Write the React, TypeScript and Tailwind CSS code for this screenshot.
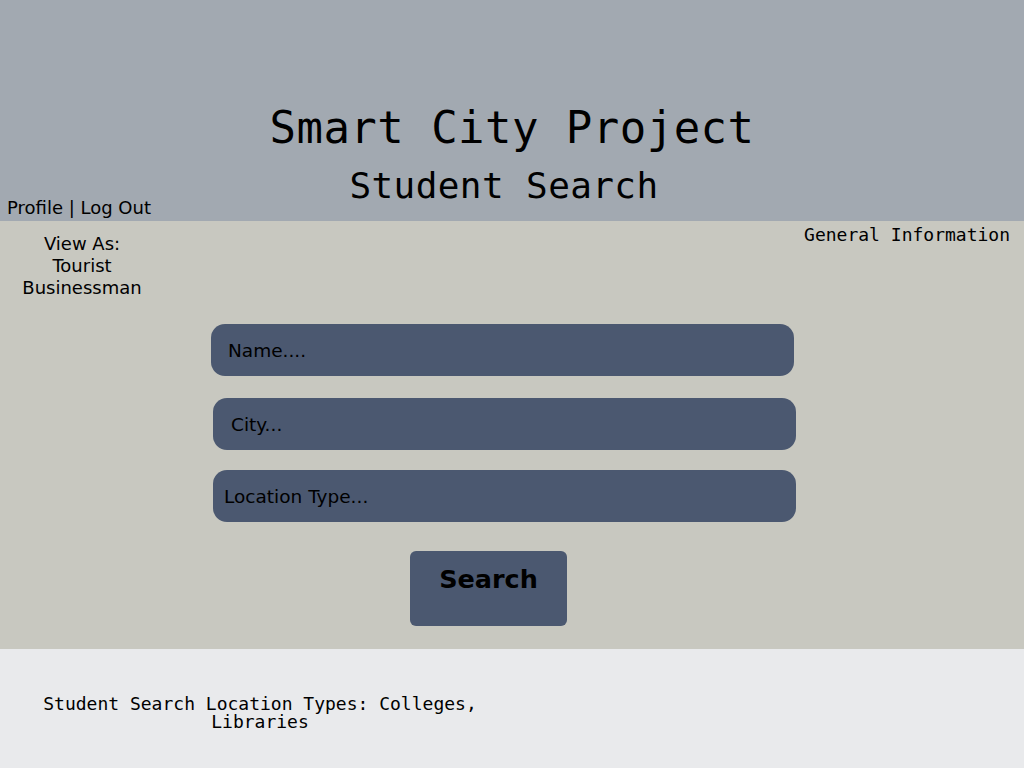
const mono = "font-['DejaVu_Sans_Mono','Liberation_Mono',monospace]";
const sans = "font-['DejaVu_Sans','Verdana',sans-serif]";

const fields = [
  { placeholder: "Name....", offset: "ml-[211px]", pad: "pl-[17px]", gap: "" },
  { placeholder: "City...", offset: "ml-[213px]", pad: "pl-[18px]", gap: "mt-[22px]" },
  { placeholder: "Location Type...", offset: "ml-[213px]", pad: "pl-[11px]", gap: "mt-[20px]" },
];

export default function App() {
  return (
    <div className={`w-[1024px] h-[768px] flex flex-col ${sans}`}>
      {/* Header */}
      <header className="h-[221px] bg-[#a2a9b1] flex flex-col">
        <h1 className={`${mono} text-[44px] leading-[32px] text-black text-center tracking-[0.45px] mt-[112px]`}>
          Smart City Project
        </h1>
        <h2 className={`${mono} text-[36px] leading-[24px] text-black text-center tracking-[0.4px] mt-[30px] pr-[16px]`}>
          Student Search
        </h2>
        <div className="mt-auto pl-[7px] pb-[3px] text-[18px] leading-[20px] text-black">
          Profile | Log Out
        </div>
      </header>

      {/* Search area */}
      <main className="h-[428px] bg-[#c8c8c0] flex flex-col">
        <div className="flex justify-between">
          <div className="w-[164px] pt-[12px] text-center text-[18px] leading-[22px] text-black">
            <div>View As:</div>
            <div>Tourist</div>
            <div>Businessman</div>
          </div>
          <div className={`${mono} pt-[4px] pr-[14px] text-[18px] leading-[20px] text-black`}>
            General Information
          </div>
        </div>

        <div className="flex flex-col mt-[25px]">
          {fields.map((f) => (
            <input
              key={f.placeholder}
              placeholder={f.placeholder}
              className={`${f.offset} ${f.pad} ${f.gap} w-[583px] h-[52px] rounded-[14px] bg-[#4b5870] text-[18.5px] text-black placeholder:text-black outline-none`}
            />
          ))}
        </div>

        <button className="ml-[410px] mt-[29px] w-[157px] h-[75px] rounded-[6px] bg-[#4b5870] flex justify-center pt-[16px] text-[25.5px] font-bold text-black leading-none">
          Search
        </button>
      </main>

      {/* Footer */}
      <footer className="flex-1 bg-[#e9eaec]">
        <p className={`${mono} w-[460px] ml-[30px] mt-[46px] text-center text-[18px] leading-[18px] text-black`}>
          Student Search Location Types: Colleges, Libraries
        </p>
      </footer>
    </div>
  );
}
